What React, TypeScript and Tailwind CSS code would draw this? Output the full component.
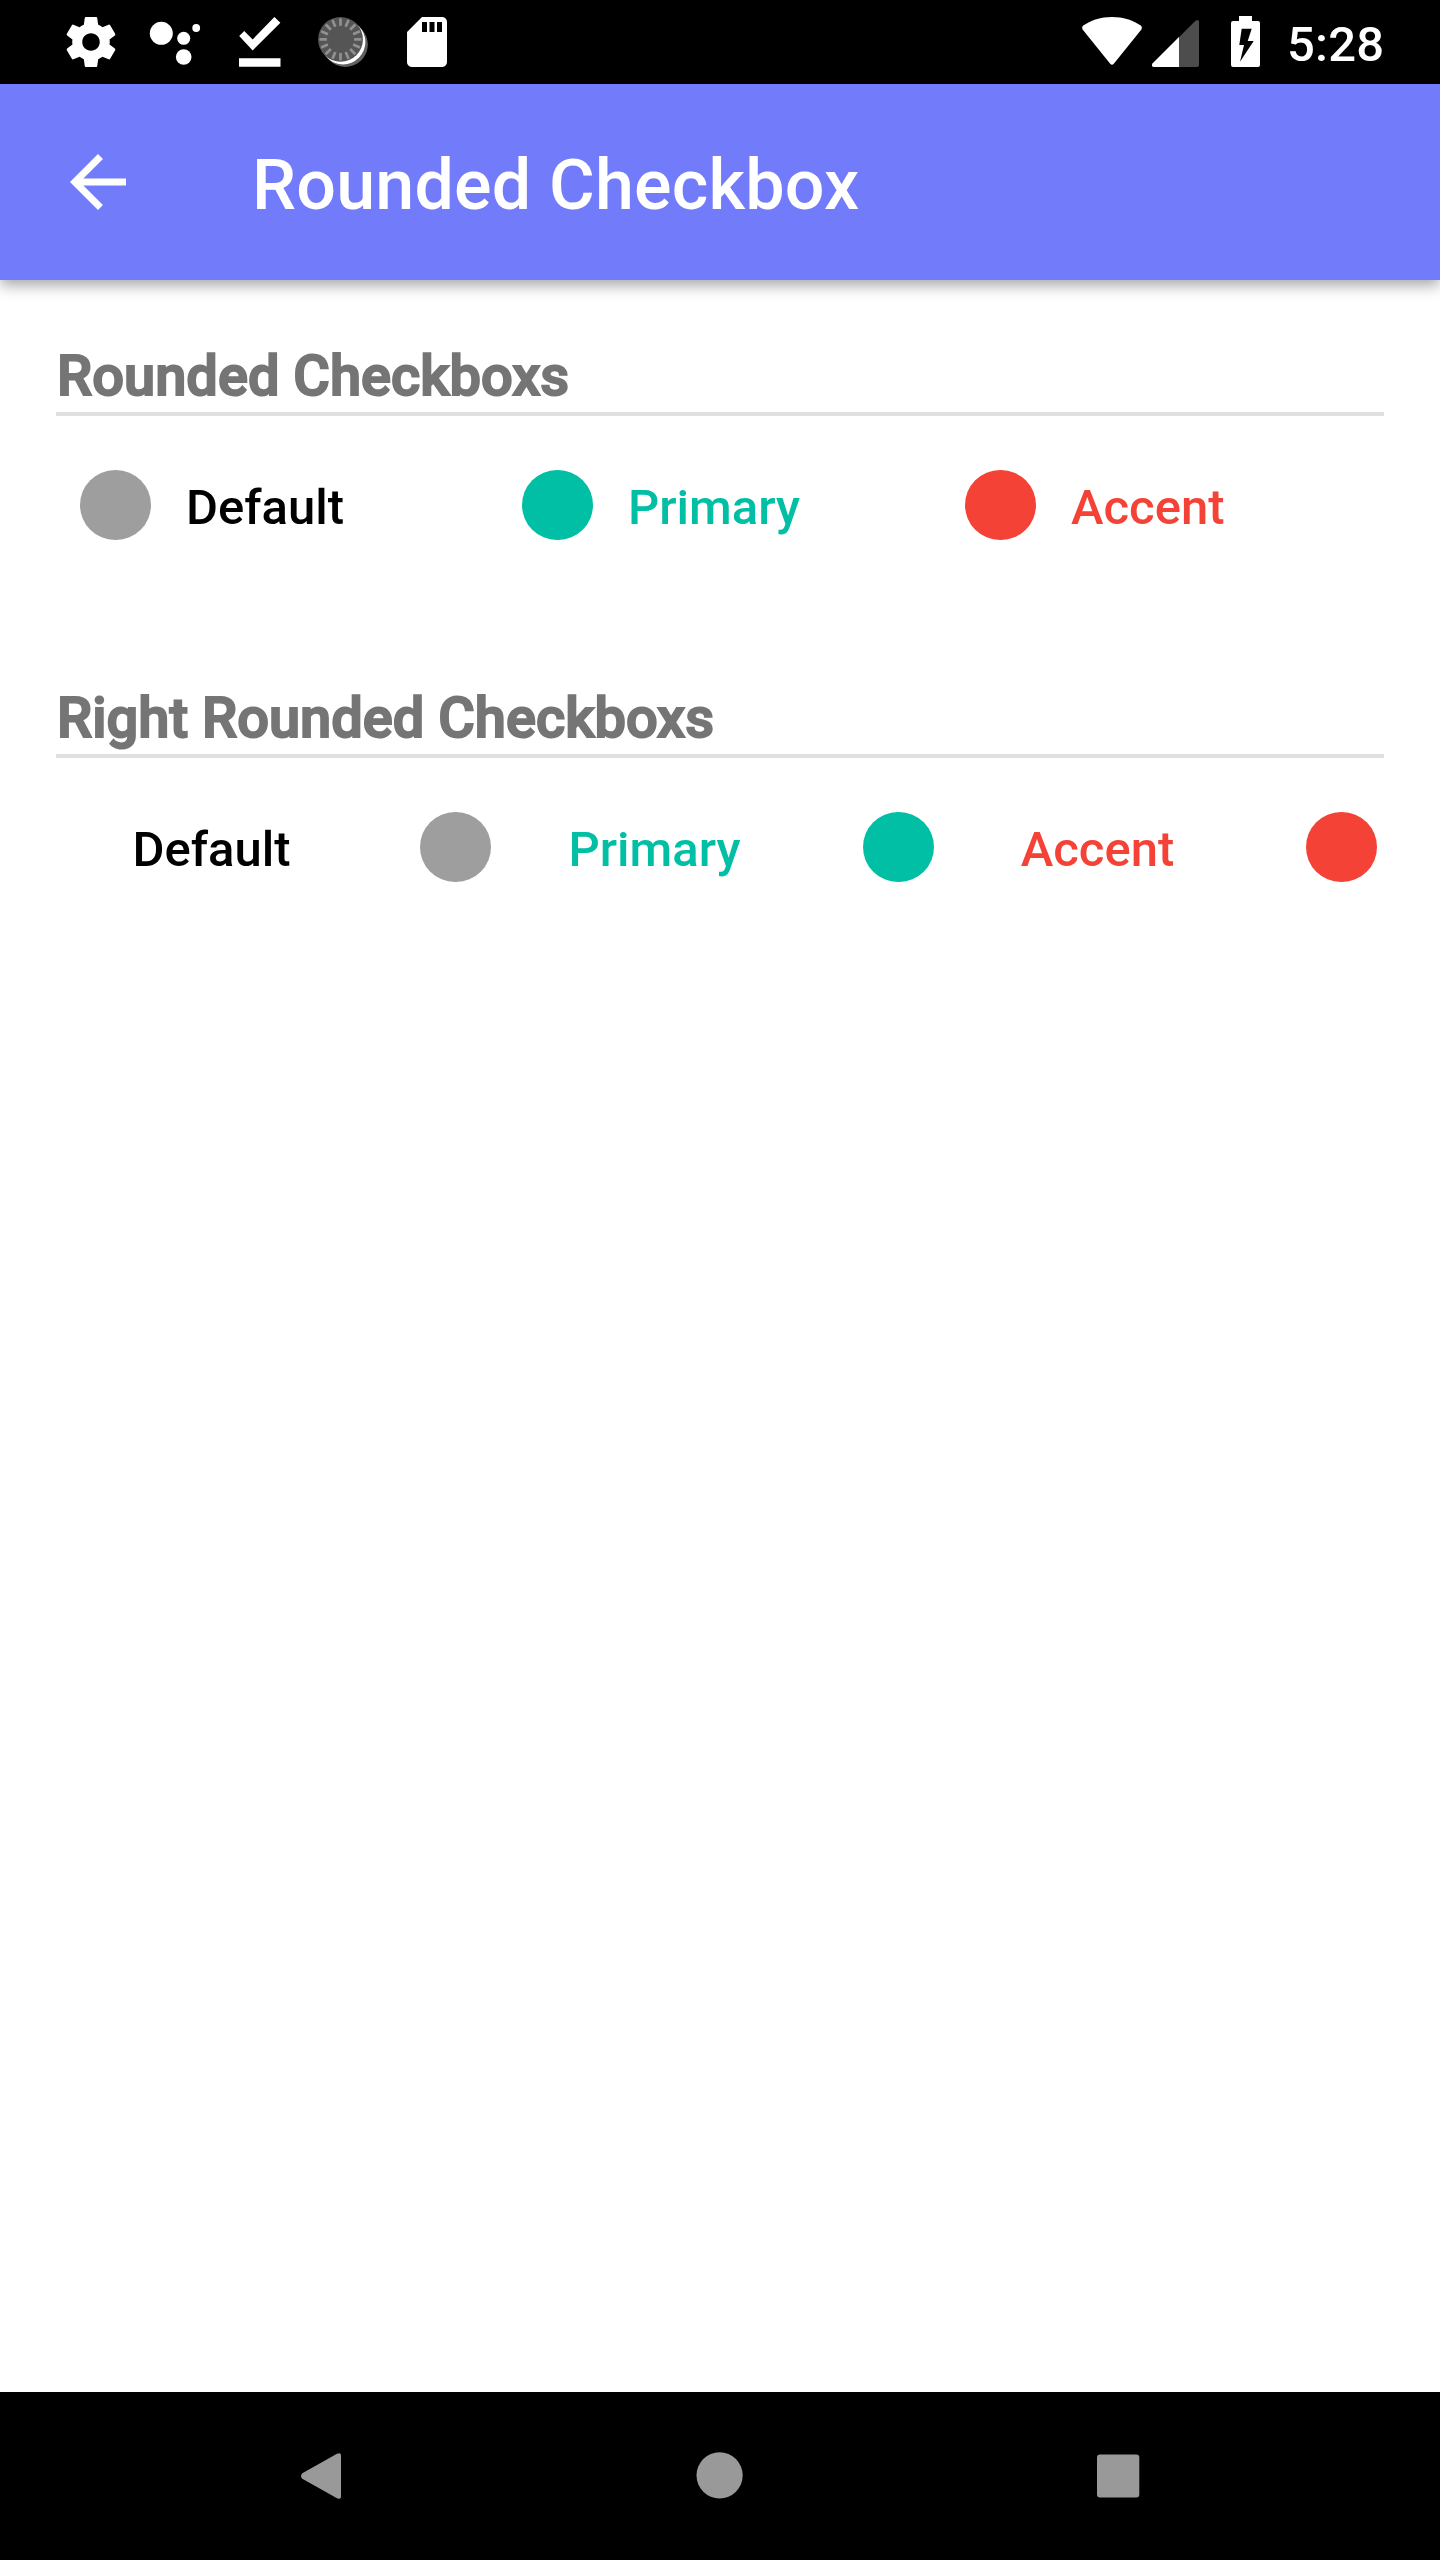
import React from "react";

type Item = { label: string; dot: string; text: string };

const items: Item[] = [
  { label: "Default", dot: "bg-[#9e9e9e]", text: "text-black" },
  { label: "Primary", dot: "bg-[#00bfa5]", text: "text-[#00bfa5]" },
  { label: "Accent", dot: "bg-[#f44336]", text: "text-[#f44336]" },
];

const ticks = Array.from({ length: 16 }, (_, i) => i * 22.5);

function StatusBar() {
  return (
    <div className="flex h-[84px] items-start justify-between bg-black pl-[61px] pr-[57px] text-white">
      <div className="flex pt-3">
        <svg className="h-[60px] w-[60px]" viewBox="0 0 24 24" fill="currentColor">
          <path d="M19.43 12.98c.04-.32.07-.64.07-.98s-.03-.66-.07-.98l2.11-1.65c.19-.15.24-.42.12-.64l-2-3.46c-.12-.22-.39-.3-.61-.22l-2.49 1c-.52-.4-1.08-.73-1.69-.98l-.38-2.65C14.46 2.18 14.25 2 14 2h-4c-.25 0-.46.18-.49.42l-.38 2.65c-.61.25-1.17.59-1.69.98l-2.49-1c-.23-.09-.49 0-.61.22l-2 3.46c-.13.22-.07.49.12.64l2.11 1.65c-.04.32-.07.65-.07.98s.03.66.07.98l-2.11 1.65c-.19.15-.24.42-.12.64l2 3.46c.12.22.39.3.61.22l2.49-1c.52.4 1.08.73 1.69.98l.38 2.65c.03.24.24.42.49.42h4c.25 0 .46-.18.49-.42l.38-2.65c.61-.25 1.17-.59 1.69-.98l2.49 1c.23.09.49 0 .61-.22l2-3.46c.12-.22.07-.49-.12-.64l-2.11-1.65zM12 15.5c-1.93 0-3.5-1.57-3.5-3.5s1.57-3.5 3.5-3.5 3.5 1.57 3.5 3.5-1.57 3.5-3.5 3.5z" />
        </svg>
        <svg className="ml-6 h-[60px] w-[60px]" viewBox="145 12 60 60" fill="currentColor">
          <circle cx="161.3" cy="33.3" r="11.5" />
          <circle cx="183.7" cy="38.3" r="6.5" />
          <circle cx="183.7" cy="57" r="7.8" />
          <circle cx="196.2" cy="28" r="3.9" />
        </svg>
        <svg className="ml-6 h-[60px] w-[60px]" viewBox="229 12 60 60" fill="currentColor">
          <path d="M239.2 36l5-5 8.5 8.4L274.4 17l6 5.7-27.7 27.7zM239 58.2h41.5v8.5H239z" />
        </svg>
        <svg className="ml-6 h-[60px] w-[60px]" viewBox="313 12 60 60">
          <path d="M324.7 55.1l4.8 5.2A22.3 22.3 0 0 0 361 28.7l-4.8-5.2z" fill="#606060" />
          <circle cx="345.4" cy="44.5" r="22.3" fill="#606060" />
          <circle cx="343" cy="42" r="22.4" fill="#fff" />
          <circle cx="340.5" cy="39.4" r="22.4" fill="#555" />
          <path d="M318.5 44l11.5 14 3 3.5z" fill="#555" />
          <g stroke="#919191" strokeWidth="2.7">
            {ticks.map((a) => (
              <path key={a} d="M340.5 18.4v7.4" transform={`rotate(${a} 340.5 39.4)`} />
            ))}
          </g>
        </svg>
        <svg className="ml-6 h-[60px] w-[60px]" viewBox="0 0 24 24" fill="currentColor">
          <path d="M18 2h-8L4.02 8 4 20c0 1.1.9 2 2 2h12c1.1 0 2-.9 2-2V4c0-1.1-.9-2-2-2zm-6 6h-2V4h2v4zm3 0h-2V4h2v4zm3 0h-2V4h2v4z" />
        </svg>
      </div>
      <div className="flex">
        <svg className="h-[84px] w-[62px]" viewBox="1081 0 62 84" fill="currentColor">
          <path d="M1112 17c11 0 21 3.300 28.800 8.600q2 1.700.6 3.900L1113.800 63.800q-1.800 2-3.600 0L1082.600 29.500q-1.400-2.200.6-3.900C1091 20.300 1101 17 1112 17z" />
        </svg>
        <svg className="ml-2 h-[84px] w-[49px]" viewBox="1151 0 49 84">
          <path d="M1153.500 67q-2.500-1-1-3.500L1195.500 20.700q3-2 3.500 1V65q0 2-2 2z" fill="#4d4d4d" />
          <path d="M1153.500 67q-2.500-1-1-3.500L1179 37v30z" fill="#fff" />
        </svg>
        <svg className="ml-[31px] h-[84px] w-[29px]" viewBox="1231 0 29 84">
          <path d="M1239 16h13v5h6q2 0 2 2v42q0 2-2 2h-25q-2 0-2-2V23q0-2 2-2h6z" fill="#fff" />
          <path d="M1241.700 28.700h10l-4 12.300h6l-13.700 20.700 4-16.700h-4.700z" fill="#000" />
        </svg>
        <span className="ml-[27px] w-[96px] whitespace-nowrap pt-4 text-[49px] font-medium leading-[57px] tracking-[0.2px]">5:28</span>
      </div>
    </div>
  );
}

function AppBar() {
  return (
    <header className="relative flex h-[196px] items-center bg-[#727cfb] pl-14 text-white shadow-[0_5px_14px_rgba(0,0,0,0.36)]">
      <svg className="h-[84px] w-[84px]" viewBox="0 0 24 24" fill="currentColor">
        <path d="M20 11H7.830l5.590-5.590L12 4l-8 8 8 8 1.410-1.410L7.830 13H20v-2z" />
      </svg>
      <h1 className="ml-28 pt-1.5 text-[70px] font-medium leading-[82px] tracking-[0.2px]">Rounded Checkbox</h1>
    </header>
  );
}

function Section({ title, right }: { title: string; right?: boolean }) {
  return (
    <section className="h-[342px]">
      <h2 className="h-[70px] whitespace-nowrap border-b-4 border-[#e0e0e0] pl-px text-[56px] font-medium leading-[60px] text-[#757575] [-webkit-text-stroke:2px_#757575]">
        {title}
      </h2>
      <div className={right ? "grid grid-cols-[443px_443px_443px] pt-[54px]" : "grid grid-cols-[442px_443px_443px] pt-[54px]"}>
        {items.map((it) => (
          <label key={it.label} className={right ? "flex items-center pl-5" : "flex items-center pl-6"}>
            {!right && <span className={`h-[70px] w-[71px] rounded-full ${it.dot}`} />}
            <span
              className={`pt-1 text-[49px] font-medium leading-[57px] ${it.text} ${right ? "w-[271px] text-center" : "ml-[35px]"}`}
            >
              {it.label}
            </span>
            {right && <span className={`ml-[73px] h-[70px] w-[71px] rounded-full ${it.dot}`} />}
          </label>
        ))}
      </div>
    </section>
  );
}

function NavBar() {
  return (
    <nav className="flex h-[168px] items-center justify-between bg-black pl-[279px] pr-[280px] text-[#999]">
      <svg className="h-[84px] w-[84px]" viewBox="279 2434 84 84" fill="currentColor">
        <path d="M302.300 2473.200L337 2453.800q4-1.800 4 1.700v41q0 3.500-4 1.700L302.300 2478.800q-2.600-2.800 0-5.600z" />
      </svg>
      <svg className="h-[84px] w-[84px]" viewBox="678 2434 84 84" fill="currentColor">
        <circle cx="719.600" cy="2475.300" r="23.100" />
      </svg>
      <svg className="h-[84px] w-[84px]" viewBox="1076 2434 84 84" fill="currentColor">
        <rect x="1097" y="2454.500" width="42.300" height="43" rx="3" />
      </svg>
    </nav>
  );
}

export default function App() {
  return (
    <div className="flex h-[2560px] w-[1440px] flex-col overflow-hidden bg-white font-['Roboto',sans-serif]">
      <StatusBar />
      <AppBar />
      <main className="flex-1 px-14 pt-[66px]">
        <Section title="Rounded Checkboxs" />
        <Section title="Right Rounded Checkboxs" right />
      </main>
      <NavBar />
    </div>
  );
}
